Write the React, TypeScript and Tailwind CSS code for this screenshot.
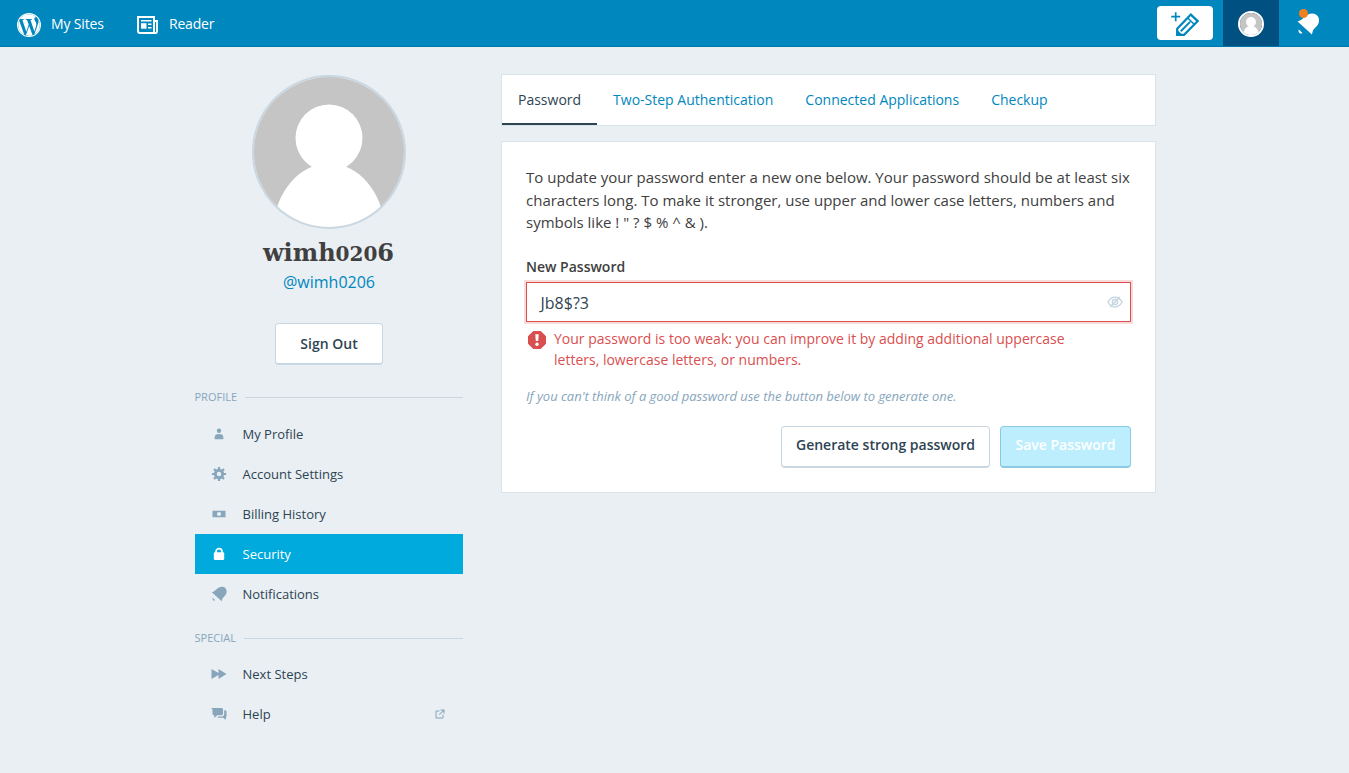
import React from "react";

type IconProps = { className?: string };

function WordPressLogo({ className }: IconProps) {
  return (
    <svg viewBox="2 2 20 20" className={className} fill="currentColor">
      <circle cx="12" cy="12" r="9.5" fill="none" stroke="currentColor" strokeWidth="0.95" />
      <path d="M12.158 12.786L9.46 20.625c.806.237 1.657.366 2.54.366 1.047 0 2.05-.18 2.986-.51-.024-.037-.046-.078-.065-.123l-2.762-7.57zM3.008 12c0 3.56 2.07 6.634 5.068 8.092L3.788 8.342c-.5 1.117-.78 2.354-.78 3.658zm15.06-.454c0-1.112-.398-1.88-.74-2.48-.456-.74-.883-1.368-.883-2.11 0-.825.627-1.595 1.51-1.595.04 0 .078.006.116.008-1.598-1.464-3.73-2.36-6.07-2.36-3.14 0-5.904 1.613-7.512 4.053.21.008.41.012.58.012.94 0 2.395-.114 2.395-.114.484-.028.54.684.057.74 0 0-.487.058-1.03.086l3.275 9.74 1.968-5.902-1.4-3.838c-.485-.028-.944-.085-.944-.085-.486-.03-.43-.77.056-.742 0 0 1.484.114 2.368.114.94 0 2.397-.114 2.397-.114.486-.028.543.684.058.74 0 0-.488.058-1.03.086l3.25 9.665.897-2.997c.456-1.17.684-2.137.684-2.907zm1.82-3.86c.04.286.06.593.06.924 0 .912-.17 1.938-.683 3.22l-2.746 7.94c2.672-1.558 4.47-4.454 4.47-7.77 0-1.564-.4-3.033-1.1-4.314z" />
    </svg>
  );
}

function ReaderIcon({ className }: IconProps) {
  return (
    <svg viewBox="0 0 21 18" className={className} fill="none" stroke="currentColor" strokeWidth="2">
      <path d="M17 17H3c-1.200 0-2-.8-2-2V1h16z" />
      <path d="M17 5h3v10.200c0 1-.6 1.800-1.600 1.800H16" strokeWidth="1.800" />
      <path d="M4 4.700h10.500M11 8.200h3.500M11 11.700h3.500" strokeWidth="1.500" />
      <path d="M4 7.200h5.500v5.500H4z" fill="currentColor" stroke="none" />
    </svg>
  );
}

function PencilPlusIcon({ className }: IconProps) {
  return (
    <svg viewBox="0 0 28 24" className={className} fill="none" stroke="currentColor" strokeWidth="2.200">
      <path d="M4.700.2v9M.2 4.700h9" strokeWidth="1.700" />
      <path d="M6.200 22.800v-6.100L19.800 2.600l6.900 6.500-13.600 13.700z" />
      <path d="M16.500 5.800l6.900 6.700" strokeWidth="1.600" />
      <path d="M9.800 19.200l9.300-9.300" strokeWidth="2" />
      <path d="M5.300 17v6.800h7z" fill="currentColor" stroke="none" />
    </svg>
  );
}

function BellIcon({ className }: IconProps) {
  return (
    <svg viewBox="0 0 24 24" className={className} fill="currentColor">
      <path d="M3.600 17.100l3.300 3.200c-.8.7-2 .7-2.700 0-.9-.8-1.300-2.300-.6-3.200z" />
      <path d="M15.600 21.600L2.400 9.600l2.600-1c1.200-.5 2.400-1.600 3.400-2.600C11 3.500 13 2.200 16 2.200c3.600 0 6.200 2.700 6.200 6.300 0 3-1.500 5-3.600 7-1.200 1.200-2 2-2.200 3.300z" />
    </svg>
  );
}

function UserIcon() {
  return (
    <svg viewBox="0 0 18 18" className="size-[18px]" fill="currentColor">
      <circle cx="9" cy="5.800" r="2.200" />
      <path d="M4.700 14.300v-2.100C4.700 10.100 6.200 9 9 9s4.300 1.100 4.300 3.200v2.100z" />
    </svg>
  );
}

function CogIcon() {
  return (
    <svg viewBox="-9 -9 18 18" className="size-[18px]" fill="none" stroke="currentColor">
      <circle r="3.700" strokeWidth="2.900" />
      <path
        d="M0-4.500V-7.100M0 4.500V7.100M-4.500 0H-7.100M4.500 0H7.100M3.200-3.200L5-5M-3.200-3.200L-5-5M3.200 3.200L5 5M-3.200 3.200L-5 5"
        strokeWidth="2.200"
      />
    </svg>
  );
}

function MoneyIcon() {
  return (
    <svg viewBox="0 0 18 18" className="size-[18px]" fill="currentColor">
      <path fillRule="evenodd" d="M2.500 5.800h13v6.400h-13zM9 6.900a2.100 2.100 0 100 4.200 2.100 2.100 0 000-4.200z" />
    </svg>
  );
}

function LockIcon() {
  return (
    <svg viewBox="0 0 18 18" className="size-[18px]" fill="currentColor">
      <path d="M6 8V6.700a3 3 0 016 0V8" fill="none" stroke="currentColor" strokeWidth="1.700" />
      <rect x="3.800" y="7.300" width="10.400" height="7.700" rx="1.200" />
    </svg>
  );
}

function ForwardIcon() {
  return (
    <svg viewBox="0 0 18 18" className="size-[18px]" fill="currentColor">
      <path d="M1.500 4l7 4V4l8 5-8 5v-4l-7 4z" />
    </svg>
  );
}

function ChatIcon() {
  return (
    <svg viewBox="0 0 18 18" className="size-[18px]" fill="currentColor">
      <path d="M.8 3h10.700c.9 0 1.500.6 1.500 1.500v4.300c0 .9-.6 1.500-1.500 1.500H7.200L4.300 13v-2.700H4c-.9 0-1.500-.6-1.500-1.500V5C2.500 4 1.800 3.600.8 3z" />
      <path d="M14.200 5.200h.8c.9 0 1.500.6 1.500 1.500v4.600c0 .6-.2 1-.7 1.300V15l-2.500-2.200H8.500c-.5 0-.9-.2-1.200-.5l.8-.8h3.900c1.300 0 2.200-.9 2.200-2.200z" />
    </svg>
  );
}

function ExternalIcon() {
  return (
    <svg viewBox="0 0 24 24" className="size-3" fill="currentColor">
      <path d="M19 13v6c0 1.105-.895 2-2 2H5c-1.105 0-2-.895-2-2V7c0-1.105.895-2 2-2h6v2H5v12h12v-6h2zM13 3v2h4.586l-7.793 7.793 1.414 1.414L19 6.414V11h2V3h-8z" />
    </svg>
  );
}

function NoticeIcon() {
  return (
    <svg viewBox="0 0 18 18" className="size-[18px] shrink-0" fill="currentColor">
      <path d="M5.300 0h7.400L18 5.300v7.400L12.700 18H5.300L0 12.700V5.300z" />
      <path d="M7.300 3.200h3.400l-.5 6.900H7.800z" fill="white" />
      <circle cx="9" cy="13.300" r="1.700" fill="white" />
    </svg>
  );
}

function HiddenIcon() {
  return (
    <svg viewBox="0 0 16 14" className="h-[14px] w-4" fill="none" stroke="currentColor" strokeWidth="1.500">
      <path d="M.9 7C4.500.5 11.500.5 15.100 7 11.500 13.500 4.500 13.500.9 7z" />
      <circle cx="8" cy="7" r="2.600" />
      <path d="M3.200 12L12.800 2" />
    </svg>
  );
}

function Avatar({ className }: IconProps) {
  return (
    <svg viewBox="0 0 150 150" className={className}>
      <rect width="150" height="150" fill="#c5c5c5" />
      <circle cx="75" cy="61" r="33.500" fill="white" />
      <path d="M19 150c3-35 26-63.500 56-63.500s53 28.500 56 63.500z" fill="white" />
    </svg>
  );
}

function SectionHeading({ label }: { label: string }) {
  return (
    <h2 className="flex h-4 items-center gap-2 text-[11px] leading-4 text-[#87a6bc]">
      {label}
      <span className="h-px flex-1 bg-[#c8d7e1]" />
    </h2>
  );
}

type ItemProps = { icon: React.ReactNode; label: string; active?: boolean; external?: boolean };

function MenuItem({ icon, label, active, external }: ItemProps) {
  return (
    <li className={active ? "flex h-10 items-center bg-[#00aadc] pl-[15.5px] pr-[17px] text-white" : "flex h-10 items-center pl-[15.5px] pr-[17px] text-[#2e4453]"}>
      <span className={active ? "text-white" : "text-[#87a6bc]"}>{icon}</span>
      <span className="ml-[14.5px] flex-1 pt-[2px] text-[13px]">{label}</span>
      {external && <span className="pb-px text-[#87a6bc]"><ExternalIcon /></span>}
    </li>
  );
}

export default function App() {
  return (
    <div className="min-h-[773px] bg-[#e9eff3] font-['Open_Sans',sans-serif] text-[#3d4145]">
      <header className="flex h-[47px] items-center border-b border-[#0079aa] bg-[#0087be] text-sm text-white">
        <a className="ml-[17px] flex w-[87px] items-center gap-[10px]">
          <WordPressLogo className="mt-[3px] size-6" />
          <span className="mt-[2px] whitespace-nowrap tracking-[-0.15px]">My Sites</span>
        </a>
        <a className="ml-[33px] flex items-center gap-[11px]">
          <ReaderIcon className="mt-[3px] h-[18px] w-[21px]" />
          <span className="mt-[2px] tracking-[-0.2px]">Reader</span>
        </a>
        <a className="ml-auto flex h-[34px] w-14 justify-center rounded bg-white text-[#0087be]">
          <PencilPlusIcon className="mt-[6px] h-6 w-7" />
        </a>
        <a className="ml-[10px] flex h-[46px] w-14 items-center justify-center bg-[#005082]">
          <Avatar className="mt-[2px] size-[26px] rounded-full border-2 border-white" />
        </a>
        <a className="relative flex h-[46px] w-[70px] pl-4">
          <BellIcon className="mt-[11px] size-[26px]" />
          <span className="absolute left-5 top-[9px] size-[9px] rounded-full bg-[#f0821e]" />
        </a>
      </header>

      <div className="flex gap-[38.5px] pl-[194.5px] pt-[27px]">
        <aside className="w-[268px]">
          <div className="flex flex-col items-center pt-px">
            <Avatar className="ml-px size-[154px] rounded-full border-2 border-[#c8d7e1]" />
            <h1 className="mt-[9px] h-[29px] whitespace-nowrap font-['DejaVu_Serif',serif] text-[24px] font-bold leading-[30px] text-[#404040]">
              wimh<span className="text-[20px]">020</span>6
            </h1>
            <a className="ml-px mt-[3px] text-base leading-6 text-[#0087be]">@wimh0206</a>
            <button className="ml-px mt-[29px] h-[42px] w-[108px] rounded border border-b-2 border-[#c8d7e1] bg-white text-sm font-semibold text-[#2e4453]">
              Sign Out
            </button>
          </div>
          <nav className="pt-6">
            <SectionHeading label="PROFILE" />
            <ul className="mt-[9px]">
              <MenuItem icon={<UserIcon />} label="My Profile" />
              <MenuItem icon={<CogIcon />} label="Account Settings" />
              <MenuItem icon={<MoneyIcon />} label="Billing History" />
              <MenuItem icon={<LockIcon />} label="Security" active />
              <MenuItem icon={<BellIcon className="size-[18px]" />} label="Notifications" />
            </ul>
            <div className="pt-4">
              <SectionHeading label="SPECIAL" />
            </div>
            <ul className="mt-2">
              <MenuItem icon={<ForwardIcon />} label="Next Steps" />
              <MenuItem icon={<ChatIcon />} label="Help" external />
            </ul>
          </nav>
        </aside>

        <main className="w-[655px]">
          <nav className="flex h-[52px] border border-[#d9e3ea] bg-white text-sm leading-[50px] text-[#0087be]">
            <a className="h-[50px] border-b-2 border-[#2e4453] px-4 text-[#2e4453]">Password</a>
            <a className="px-4">Two-Step Authentication</a>
            <a className="px-4">Connected Applications</a>
            <a className="px-4">Checkup</a>
          </nav>

          <section className="mt-[15px] h-[352px] border border-[#d9e3ea] bg-white px-6 pt-6">
            <p className="whitespace-nowrap text-[15px] leading-[22.5px] text-[#404040]">
              To update your password enter a new one below. Your password should be at least six
              <br />
              characters long. To make it stronger, use upper and lower case letters, numbers and
              <br />
              symbols like ! " ? $ % ^ &amp; ).
            </p>
            <label className="mt-[22px] block text-sm font-semibold leading-[21px] text-[#404040]">New Password</label>
            <div className="mt-[5px] flex h-10 items-center justify-between border border-[#d94f4f] pl-[13.5px] pr-2 text-base text-[#2e4453] shadow-[0_0_0_2px_#f8dcdc]">
              <span className="pt-[2px]">Jb8$?3</span>
              <span className="-mr-[0.5px] text-[#c8d7e1]"><HiddenIcon /></span>
            </div>
            <div className="mt-[6px] flex gap-[8px] pl-[2px] text-sm leading-[21px] text-[#d94f4f]">
              <span className="pt-[3px]"><NoticeIcon /></span>
              <p className="whitespace-nowrap">
                Your password is too weak: you can improve it by adding additional uppercase
                <br />
                letters, lowercase letters, or numbers.
              </p>
            </div>
            <p className="mt-4 text-[13px] italic leading-5 tracking-[-0.02px] text-[#87a6bc]">
              If you can't think of a good password use the button below to generate one.
            </p>
            <div className="mt-5 flex justify-end gap-[10px] text-sm font-semibold">
              <button className="h-[42px] w-[209px] rounded border border-b-2 border-[#c8d7e1] bg-white pb-[2px] text-[#2e4453]">
                Generate strong password
              </button>
              <button className="h-[42px] w-[131px] rounded border border-b-2 border-[#8cc9e2] bg-[#bceefd] pb-[2px] text-white">
                Save Password
              </button>
            </div>
          </section>
        </main>
      </div>
    </div>
  );
}
